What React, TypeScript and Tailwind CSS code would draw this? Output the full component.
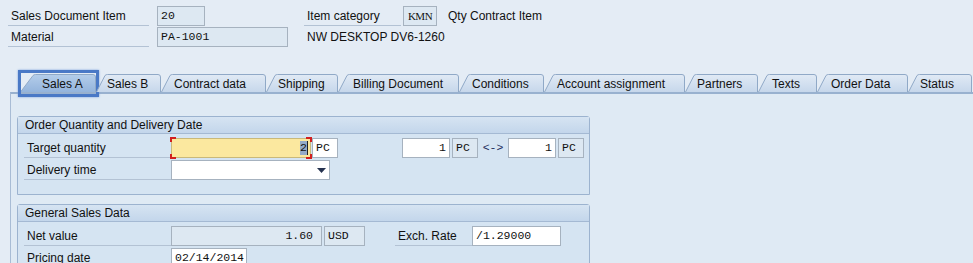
import React from "react";

const tabs = [
  { label: "Sales A", w: 76, pl: 22, active: true },
  { label: "Sales B", w: 65, pl: 11 },
  { label: "Contract data", w: 105, pl: 13 },
  { label: "Shipping", w: 72, pl: 12 },
  { label: "Billing Document", w: 121, pl: 15 },
  { label: "Conditions", w: 85, pl: 13 },
  { label: "Account assignment", w: 141, pl: 13 },
  { label: "Partners", w: 73, pl: 12 },
  { label: "Texts", w: 59, pl: 14 },
  { label: "Order Data", w: 91, pl: 14 },
  { label: "Status", w: 64, pl: 12 },
];

const mono = "font-['Liberation_Mono',monospace] text-[11.5px]";

const Tab = ({ label, w, pl, active, i }: { label: string; w: number; pl: number; active?: boolean; i: number }) => {
  const h = 18;
  const slant = active ? 13 : 9;
  return (
    <div className="relative h-[18px] shrink-0 flex items-center text-[12px] text-[#111]" style={{ width: w }}>
      <svg className="absolute inset-0" width={w} height={h} viewBox={`0 0 ${w} ${h}`}>
        <defs>
          <linearGradient id={`tg${i}`} x1="0" y1="0" x2="0" y2="1">
            <stop offset="0" stopColor={active ? "#b4cdea" : "#e1eaf5"} />
            <stop offset="1" stopColor={active ? "#94b4dc" : "#c6d7eb"} />
          </linearGradient>
        </defs>
        <path
          d={`M0.5 ${h} L${slant} 1.5 Q${slant + 1} 0.5 ${slant + 2.5} 0.5 L${w - 3} 0.5 Q${w - 0.5} 0.5 ${w - 0.5} 3 L${w - 0.5} ${h}`}
          fill={`url(#tg${i})`}
          stroke="#90a9c7"
        />
      </svg>
      <span className="relative whitespace-nowrap pt-[1px]" style={{ paddingLeft: pl }}>{label}</span>
      {active && (
        <div className="absolute left-[-2px] top-[-4px] right-[-3px] bottom-[-5px] border-[3px] border-[#4a79c6] shadow-[0_0_2px_#7aa0dc]" />
      )}
    </div>
  );
};

const Label = ({ text, w }: { text: string; w: number }) => (
  <div className="h-[20px] flex items-center border-b border-[#b3c2d4] pl-[3px] text-[12px] text-[#111] whitespace-nowrap shrink-0" style={{ width: w }}>
    {text}
  </div>
);

const Box = ({ children, w, cls = "" }: { children?: React.ReactNode; w: number; cls?: string }) => (
  <div className={`h-[20px] shrink-0 flex items-center border border-[#a6b2bf] px-[3px] ${mono} text-[#111] ${cls}`} style={{ width: w }}>
    {children}
  </div>
);

const Group = ({ title, children }: { title: string; children: React.ReactNode }) => (
  <div className="w-[573px] border border-[#9cb3cf] rounded-t-[3px] bg-[#d5e4f2]">
    <div className="h-[17px] flex items-center pl-[7px] text-[12px] text-[#111] bg-gradient-to-b from-[#d6e4f2] to-[#c3d6eb] border-b border-[#a4b9d3]">
      {title}
    </div>
    <div className="pl-[6px] pt-[4px] pb-[14px] flex flex-col gap-[2px]">{children}</div>
  </div>
);

export default function App() {
  return (
    <div className="w-[973px] h-[263px] overflow-hidden bg-[#e4ecf5] font-['Liberation_Sans',Arial,sans-serif] text-[12px]">
      <div className="pt-[6px] pl-[8px] flex flex-col gap-[1px]">
        <div className="flex items-center">
          <Label text="Sales Document Item" w={141} />
          <Box w={48} cls="ml-[8px] bg-[#dde8f2]">20</Box>
          <div className="ml-[99px]"><Label text="Item category" w={97} /></div>
          <div className="ml-[2px] h-[20px] w-[34px] flex items-center justify-center border border-[#a6b2bf] bg-[#dde8f2] font-['Liberation_Serif',serif] text-[11px] tracking-[-0.5px] text-[#111]">KMN</div>
          <span className="ml-[11px] text-[#111]">Qty Contract Item</span>
        </div>
        <div className="flex items-center">
          <Label text="Material" w={141} />
          <Box w={131} cls="ml-[8px] bg-[#dde8f2]">PA-1001</Box>
          <span className="ml-[19px] text-[#111]">NW DESKTOP DV6-1260</span>
        </div>
      </div>

      <div className="mt-[27px] pl-[20px] flex items-end">
        {tabs.map((t, i) => (
          <Tab key={t.label} {...t} i={i} />
        ))}
      </div>

      <div className="ml-[10px] border-l border-t-[2px] border-l-[#a8bcd5] border-t-[#98b1cf] bg-[#dfeaf4] h-[200px] pl-[6px] pt-[22px] flex flex-col gap-[9px]">
        <Group title="Order Quantity and Delivery Date">
          <div className="flex items-center">
            <Label text="Target quantity" w={147} />
            <div className="relative h-[20px] w-[140px] bg-[#fbe89f] border border-[#c9b97a] flex items-center justify-end pr-[2px]">
              <span className={`${mono} bg-[#93abc8] text-[#111] leading-[14px]`}>2</span>
              <span className="w-[1px] h-[14px] bg-[#222]" />
              <span className="absolute left-[-2px] top-[-2px] w-[6px] h-[5px] border-l-2 border-t-2 border-[#d21f1f]" />
              <span className="absolute left-[-2px] bottom-[-2px] w-[6px] h-[5px] border-l-2 border-b-2 border-[#d21f1f]" />
              <span className="absolute right-[-2px] top-[-2px] w-[6px] h-[5px] border-r-2 border-t-2 border-[#d21f1f]" />
              <span className="absolute right-[-2px] bottom-[-2px] w-[6px] h-[5px] border-r-2 border-b-2 border-[#d21f1f]" />
            </div>
            <Box w={26} cls="ml-[1px] bg-white">PC</Box>
            <Box w={48} cls="ml-[64px] bg-white justify-end">1</Box>
            <Box w={26} cls="ml-[2px] bg-[#dde8f2]">PC</Box>
            <span className={`w-[30px] text-center ${mono} text-[#1c2c5c]`}>&lt;-&gt;</span>
            <Box w={48} cls="bg-white justify-end">1</Box>
            <Box w={26} cls="ml-[2px] bg-[#dde8f2]">PC</Box>
          </div>
          <div className="flex items-center">
            <Label text="Delivery time" w={147} />
            <div className="h-[20px] w-[159px] bg-white border border-[#a6b2bf] flex items-center justify-end pr-[3px]">
              <svg width="9" height="5" viewBox="0 0 9 5">
                <path d="M0 0 L9 0 L4.5 5 Z" fill="#25324f" />
              </svg>
            </div>
          </div>
        </Group>

        <Group title="General Sales Data">
          <div className="flex items-center">
            <Label text="Net value" w={147} />
            <Box w={151} cls="bg-[#dde8f2] justify-end pr-[8px]">1.60</Box>
            <Box w={41} cls="ml-[2px] bg-[#dde8f2]">USD</Box>
            <div className="ml-[30px]"><Label text="Exch. Rate" w={77} /></div>
            <Box w={89} cls="bg-white">/1.29000</Box>
          </div>
          <div className="flex items-center">
            <Label text="Pricing date" w={147} />
            <Box w={76} cls="bg-white">02/14/2014</Box>
          </div>
        </Group>
      </div>
    </div>
  );
}
